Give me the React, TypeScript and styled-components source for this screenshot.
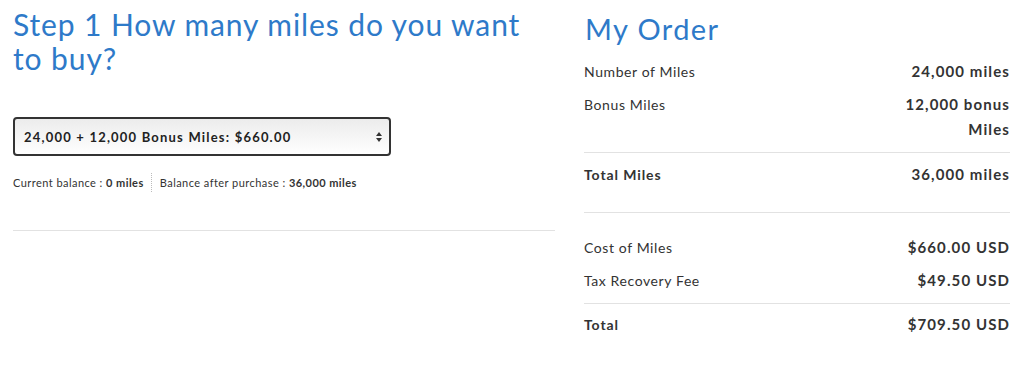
import styled, { createGlobalStyle } from 'styled-components';

const GlobalStyle = createGlobalStyle`
    body {
        margin: 0;
        background: #ffffff;
        font-family: Lato, "Liberation Sans", sans-serif;
        color: #333333;
    }
`;

const Page = styled.div`
    display: grid;
    grid-template-columns: 542px 426px;
    column-gap: 29px;
    padding: 7px 14px 0 13px;
`;

const Left = styled.section``;

const Heading = styled.h1`
    margin: 0;
    font-size: 30px;
    line-height: 34px;
    font-weight: 400;
    color: #2e7ac9;
    letter-spacing: 0.9px;
`;

const SelectBox = styled.div`
    margin-top: 42px;
    width: 378px;
    height: 39px;
    box-sizing: border-box;
    border: 2px solid #333333;
    border-radius: 4px;
    background: linear-gradient(#ececec, #f7f7f7 60%, #ffffff);
    display: flex;
    align-items: center;
    justify-content: space-between;
    padding: 0 6px 0 9px;
    font-size: 13px;
    font-weight: 700;
    color: #222222;
    letter-spacing: 1.2px;
`;

const Balance = styled.div`
    margin-top: 17px;
    display: flex;
    align-items: center;
    font-size: 11px;
    letter-spacing: 0.45px;
    color: #333333;
    b {
        font-weight: 700;
    }
`;

const BalanceItem = styled.span`
    padding-right: 7px;
    & + & {
        padding-left: 8px;
        border-left: 1px dotted #bbbbbb;
        padding-top: 3px;
        padding-bottom: 3px;
    }
`;

const Divider = styled.hr`
    margin: 38px 0 0;
    border: 0;
    border-top: 1px solid #e2e2e2;
`;

const Right = styled.section``;

const OrderTitle = styled.h2`
    margin: 3px 0 0 1px;
    font-size: 29px;
    line-height: 38px;
    font-weight: 400;
    letter-spacing: 1.4px;
    color: #2e7ac9;
`;

const Group = styled.div<{ $top?: number; $bottom?: number; $last?: boolean }>`
    padding-top: ${(p) => p.$top ?? 4}px;
    padding-bottom: ${(p) => p.$bottom ?? 6}px;
    border-bottom: ${(p) => (p.$last ? 'none' : '1px solid #e2e2e2')};
`;

const Row = styled.div<{ $strong?: boolean }>`
    display: flex;
    justify-content: space-between;
    padding: 4px 0;
    font-size: 14px;
    line-height: 25px;
    letter-spacing: ${(p) => (p.$strong ? 0.9 : 0.6)}px;
    font-weight: ${(p) => (p.$strong ? 700 : 400)};
`;

const Value = styled.span`
    font-size: 15px;
    font-weight: 700;
    text-align: right;
    max-width: 118px;
    letter-spacing: 1.1px;
`;

function SelectArrows() {
    return (
        <svg width="8" height="12" viewBox="0 0 8 12">
            <path d="M4 1 L7 5 H1 Z M4 11 L1 7 H7 Z" fill="#333" />
        </svg>
    );
}

export default function App() {
    return (
        <>
            <GlobalStyle />
            <Page>
                <Left>
                    <Heading>Step 1 How many miles do you want to buy?</Heading>
                    <SelectBox>
                        <span>24,000 + 12,000 Bonus Miles: $660.00</span>
                        <SelectArrows />
                    </SelectBox>
                    <Balance>
                        <BalanceItem>
                            Current balance : <b>0 miles</b>
                        </BalanceItem>
                        <BalanceItem>
                            Balance after purchase : <b>36,000 miles</b>
                        </BalanceItem>
                    </Balance>
                    <Divider />
                </Left>
                <Right>
                    <OrderTitle>My Order</OrderTitle>
                    <Group $top={7} $bottom={6}>
                        <Row>
                            <span>Number of Miles</span>
                            <Value>24,000 miles</Value>
                        </Row>
                        <Row>
                            <span>Bonus Miles</span>
                            <Value>12,000 bonus Miles</Value>
                        </Row>
                    </Group>
                    <Group $top={5} $bottom={21}>
                        <Row $strong>
                            <span>Total Miles</span>
                            <Value>36,000 miles</Value>
                        </Row>
                    </Group>
                    <Group $top={18} $bottom={6}>
                        <Row>
                            <span>Cost of Miles</span>
                            <Value>$660.00 USD</Value>
                        </Row>
                        <Row>
                            <span>Tax Recovery Fee</span>
                            <Value>$49.50 USD</Value>
                        </Row>
                    </Group>
                    <Group $top={4} $last>
                        <Row $strong>
                            <span>Total</span>
                            <Value>$709.50 USD</Value>
                        </Row>
                    </Group>
                </Right>
            </Page>
        </>
    );
}
